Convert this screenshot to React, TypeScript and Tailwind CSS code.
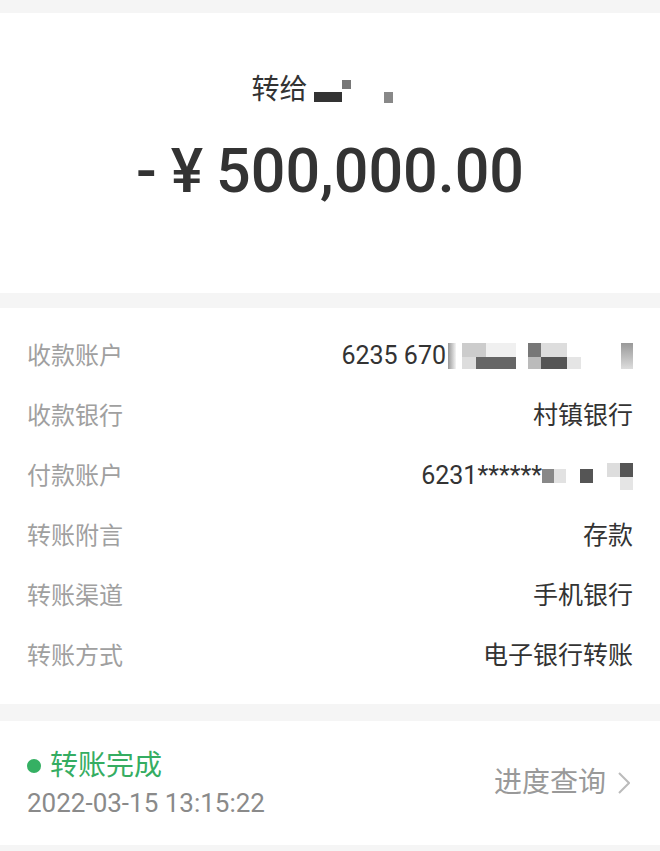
import React from "react"

const font = { fontFamily: '"Roboto", "Noto Sans CJK SC", sans-serif' }

const rows: { label: string; value: React.ReactNode }[] = [
  {
    label: "收款账户",
    value: (
      <span className="flex items-center">
        <span>6235 670</span>
        <span className="ml-[2px] h-[26px] w-[8px] bg-gradient-to-r from-[#555] to-[#eee] opacity-60" />
        <span className="ml-[6px] flex flex-col">
          <span className="flex">
            <span className="h-[14px] w-[24px] bg-[#ccc]" />
            <span className="h-[14px] w-[30px] bg-[#f0f0f0]" />
          </span>
          <span className="flex">
            <span className="h-[12px] w-[14px] bg-[#ddd]" />
            <span className="h-[12px] w-[40px] bg-[#666]" />
          </span>
        </span>
        <span className="ml-[12px] flex flex-col">
          <span className="flex">
            <span className="h-[14px] w-[13px] bg-[#777]" />
            <span className="h-[14px] w-[26px] bg-[#ddd]" />
          </span>
          <span className="flex">
            <span className="h-[12px] w-[13px] bg-[#bbb]" />
            <span className="h-[12px] w-[26px] bg-[#555]" />
            <span className="h-[12px] w-[14px] bg-[#e5e5e5]" />
          </span>
        </span>
        <span className="ml-[40px] h-[26px] w-[12px] bg-gradient-to-b from-[#999] to-[#ddd]" />
      </span>
    ),
  },
  { label: "收款银行", value: "村镇银行" },
  {
    label: "付款账户",
    value: (
      <span className="flex items-center">
        <span>6231******</span>
        <span className="h-[14px] w-[12px] bg-[#888]" />
        <span className="h-[14px] w-[12px] bg-[#e2e2e2]" />
        <span className="ml-[14px] h-[14px] w-[13px] bg-[#555]" />
        <span className="ml-[14px] flex flex-col">
          <span className="flex">
            <span className="h-[14px] w-[13px] bg-[#ddd]" />
            <span className="h-[14px] w-[13px] bg-[#555]" />
          </span>
          <span className="flex">
            <span className="h-[13px] w-[13px] bg-white" />
            <span className="h-[13px] w-[13px] bg-[#e5e5e5]" />
          </span>
        </span>
      </span>
    ),
  },
  { label: "转账附言", value: "存款" },
  { label: "转账渠道", value: "手机银行" },
  { label: "转账方式", value: "电子银行转账" },
]

export default function App() {
  return (
    <div className="flex h-[851px] w-[660px] flex-col bg-[#f5f5f5] pt-[13px]" style={font}>
      <div className="flex h-[280px] flex-col items-center bg-white pt-[56px]">
        <div className="mr-[16px] flex items-center text-[28px] leading-[42px] text-[#333]">
          <span>转给</span>
          <span className="ml-[6px] flex items-start">
            <span className="mt-[14px] h-[10px] w-[28px] bg-[#333]" />
            <span className="mt-[2px] h-[9px] w-[9px] bg-[#777]" />
            <span className="ml-[33px] mt-[14px] h-[11px] w-[9px] bg-[#888]" />
          </span>
        </div>
        <div className="mt-[25px] flex items-center text-[61px] leading-[70px] font-medium text-[#333]">
          <span>-</span>
          <span className="ml-[14px]">¥</span>
          <span className="ml-[13px]">500,000.00</span>
        </div>
      </div>
      <div className="mt-[15px] flex flex-col bg-white px-[27px] py-[18px]">
        {rows.map(r => (
          <div key={r.label} className="flex h-[60px] items-center justify-between">
            <span className="text-[24px] text-[#a0a0a0]">{r.label}</span>
            <span className="text-[25px] text-[#333]">{r.value}</span>
          </div>
        ))}
      </div>
      <div className="mt-[17px] flex h-[124px] items-center justify-between bg-white pl-[27px] pr-[30px]">
        <div className="flex flex-col">
          <div className="flex items-center text-[28px] leading-[36px] text-[#35ad62]">
            <span className="mr-[9px] h-[14px] w-[14px] rounded-full bg-[#35b063]" />
            转账完成
          </div>
          <div className="mt-[4px] text-[26px] leading-[30px] text-[#8a8a8a]">2022-03-15 13:15:22</div>
        </div>
        <div className="flex items-center text-[28px] text-[#999]">
          进度查询
          <svg className="ml-[12px]" width="12" height="22" viewBox="0 0 12 22" fill="none" stroke="#bbb" strokeWidth="2">
            <path d="M1 1l10 10L1 21" />
          </svg>
        </div>
      </div>
    </div>
  )
}
